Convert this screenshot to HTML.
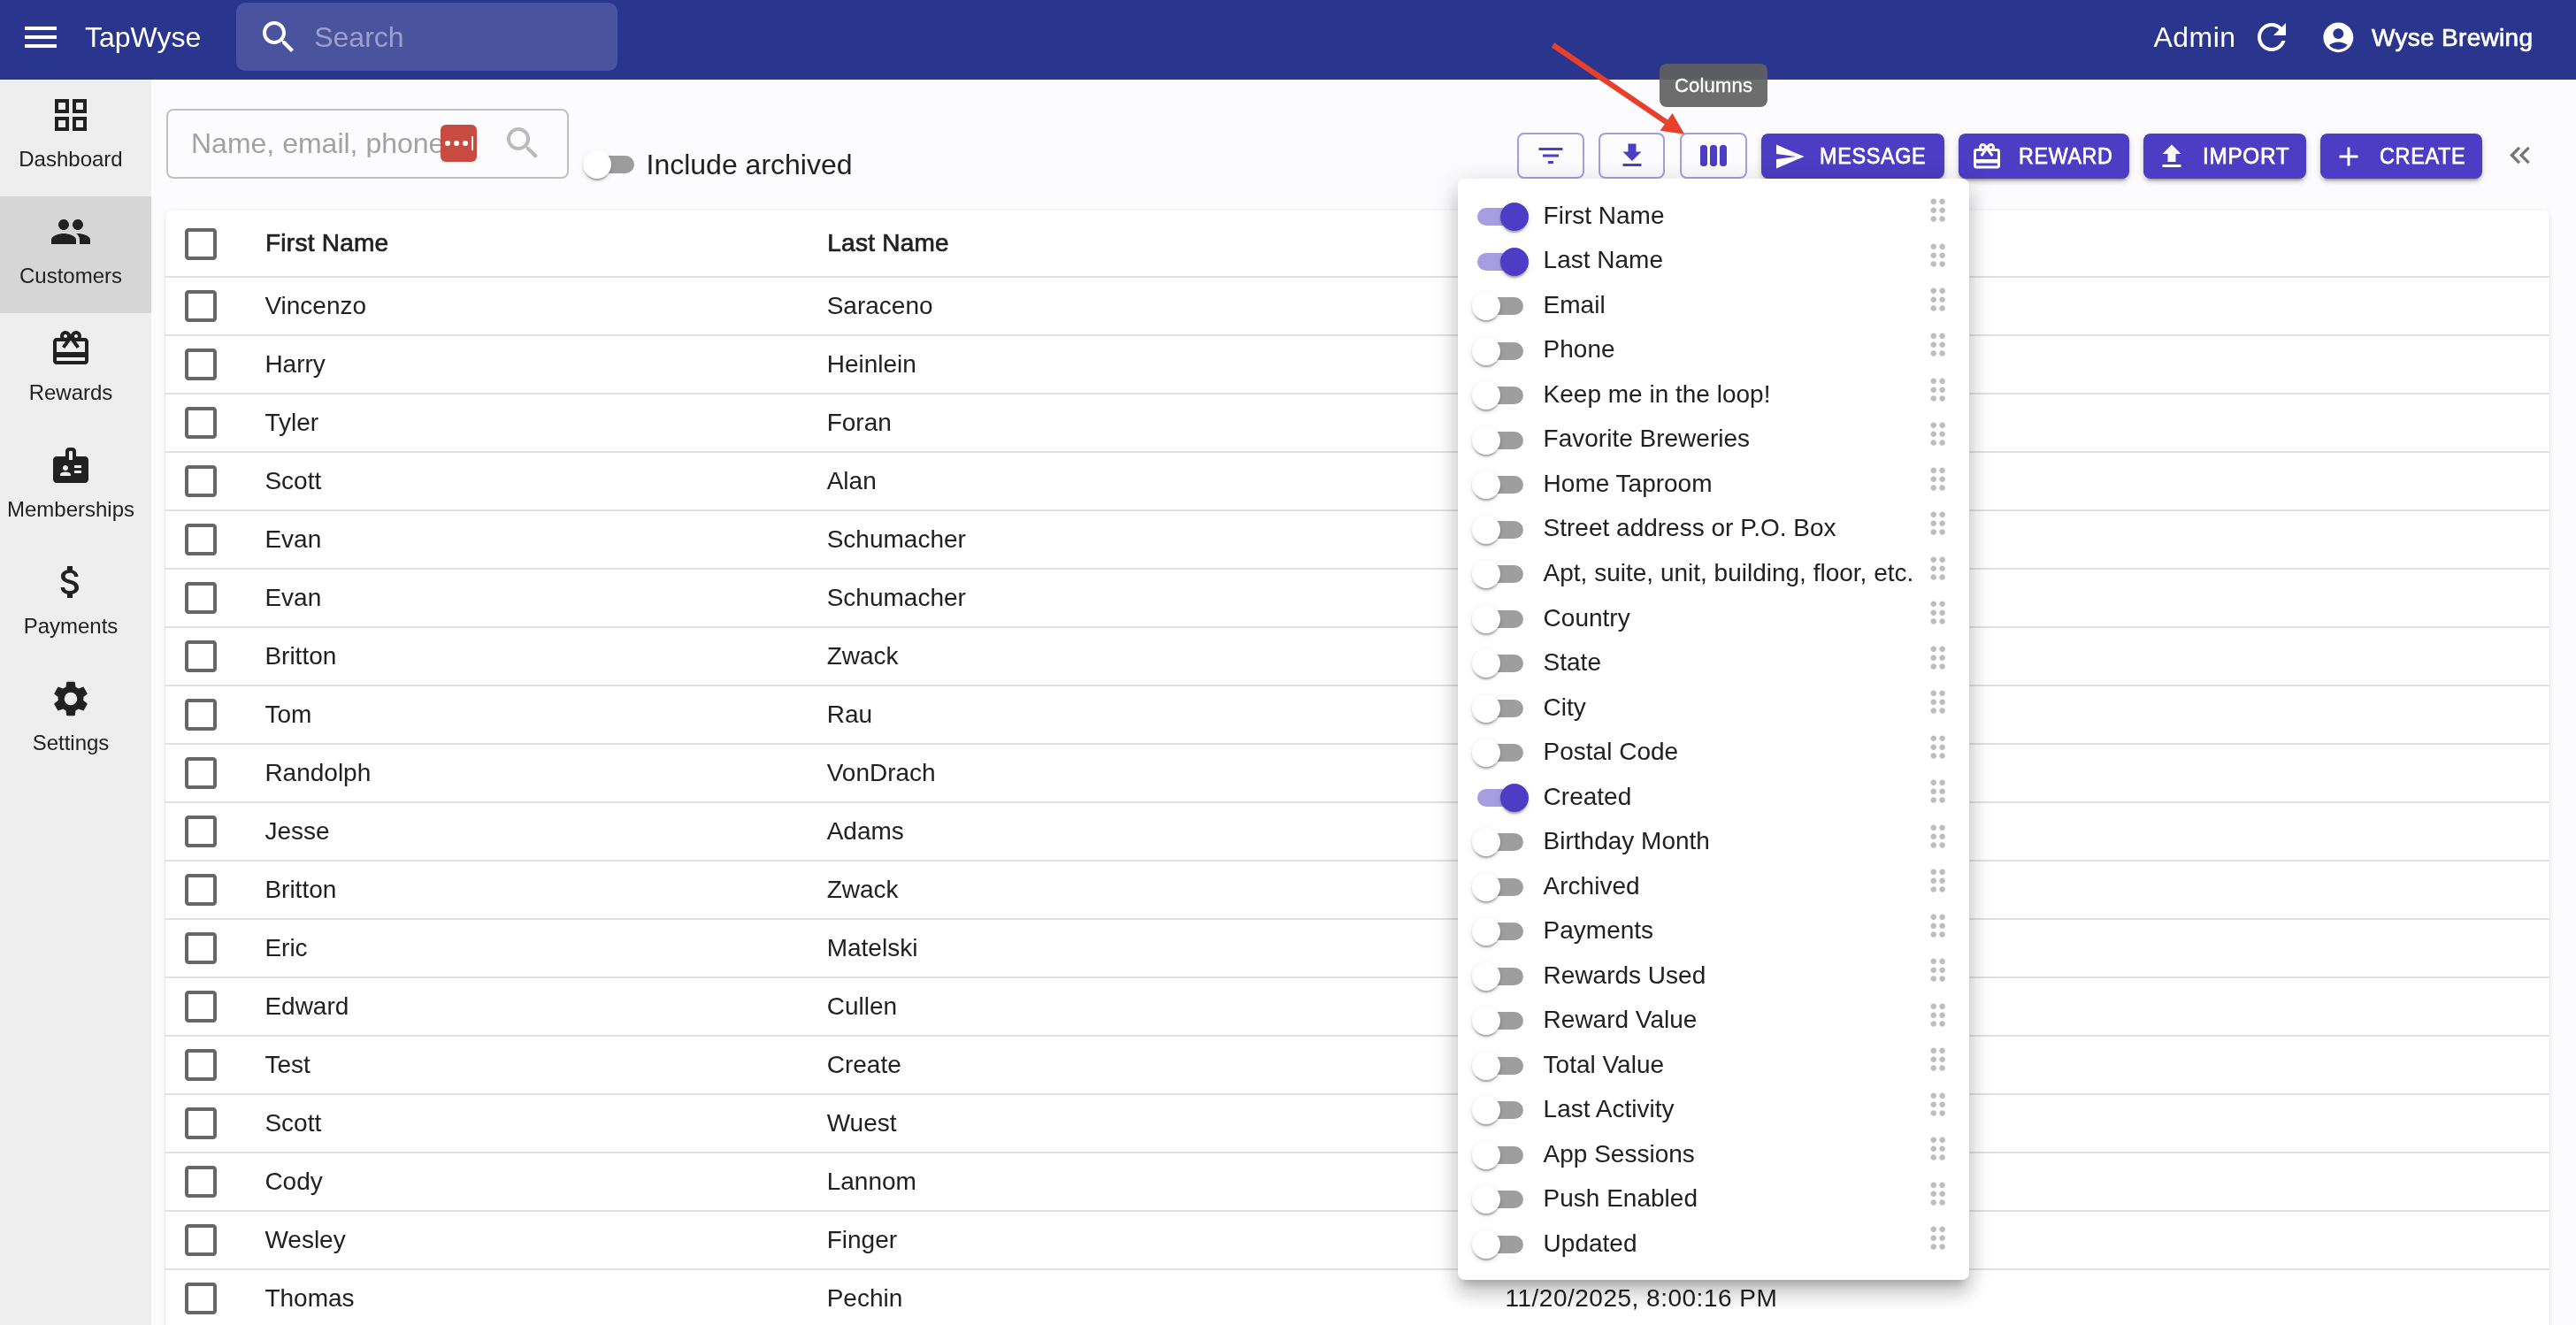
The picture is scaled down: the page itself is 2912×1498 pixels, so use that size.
<!DOCTYPE html>
<html><head><meta charset="utf-8"><title>TapWyse Customers</title>
<style>
html,body{margin:0;padding:0;}
body{width:2912px;height:1498px;overflow:hidden;position:relative;will-change:transform;background:#fcfcfe;font-family:"Liberation Sans",sans-serif;color:#212121;}
.t{position:absolute;white-space:nowrap;}
.i{position:absolute;display:block;}
.b{position:absolute;box-sizing:border-box;}
@media (max-width:1600px){html{zoom:0.5;}}
</style></head><body>

<div class="b" style="left:0;top:0;width:2912px;height:90px;background:#2a358e;"></div>
<svg class="i" style="left:22.0px;top:18.0px;width:48.0px;height:48.0px;" viewBox="0 0 24 24"><path fill="#fff" d="M3 18h18v-2H3v2zm0-5h18v-2H3v2zm0-7v2h18V6H3z"/></svg>
<div class="t" style="left:96.0px;top:26.4px;font-size:32px;line-height:32px;color:#fff;font-weight:400;">TapWyse</div>
<div class="b" style="left:267px;top:3px;width:431px;height:77px;background:rgba(255,255,255,0.15);border-radius:10px;"></div>
<svg class="i" style="left:290.7px;top:18.0px;width:48.0px;height:48.0px;" viewBox="0 0 24 24"><path fill="#fff" d="M15.5 14h-.79l-.28-.27C15.41 12.59 16 11.11 16 9.5 16 5.91 13.09 3 9.5 3S3 5.91 3 9.5 5.91 16 9.5 16c1.61 0 3.09-.59 4.23-1.570l.27.28v.79l5 4.99L20.49 19l-4.99-5zm-6 0C7.01 14 5 11.99 5 9.5S7.01 5 9.5 5 14 7.01 14 9.5 11.99 14 9.5 14z"/></svg>
<div class="t" style="left:355.2px;top:25.7px;font-size:32px;line-height:32px;color:rgba(255,255,255,0.45);font-weight:400;">Search</div>
<div class="t" style="left:2434.5px;top:26.1px;font-size:32px;line-height:32px;color:#fff;font-weight:400;letter-spacing:0.45px;">Admin</div>
<svg class="i" style="left:2544.0px;top:18.4px;width:48.0px;height:48.0px;" viewBox="0 0 24 24"><path fill="#fff" d="M17.65 6.35C16.2 4.9 14.21 4 12 4c-4.42 0-7.99 3.58-7.99 8s3.57 8 7.99 8c3.73 0 6.84-2.55 7.73-6h-2.08c-.82 2.33-3.040 4-5.65 4-3.31 0-6-2.69-6-6s2.69-6 6-6c1.66 0 3.14.69 4.22 1.78L13 11h7V4l-2.35 2.35z"/></svg>
<svg class="i" style="left:2623.4px;top:21.5px;width:40.7px;height:40.7px;" viewBox="0 0 24 24"><path fill="#fff" d="M12 2C6.48 2 2 6.48 2 12s4.48 10 10 10 10-4.48 10-10S17.52 2 12 2zm0 4c1.93 0 3.5 1.57 3.5 3.5S13.93 13 12 13s-3.5-1.57-3.5-3.5S10.07 6 12 6zm0 14c-2.03 0-4.43-.82-6.14-2.88C7.55 15.8 9.68 15 12 15s4.45.8 6.14 2.12C16.43 19.18 14.03 20 12 20z"/></svg>
<div class="t" style="left:2681.0px;top:28.8px;font-size:28px;line-height:28px;color:#fff;font-weight:400;letter-spacing:0.3px;-webkit-text-stroke:0.7px #fff;">Wyse Brewing</div>
<div class="b" style="left:0;top:90px;width:171px;height:1408px;background:#eeeeee;"></div>
<div class="b" style="left:0;top:222px;width:171px;height:132px;background:#d6d6d6;"></div>
<svg class="i" style="left:56.0px;top:105.8px;width:48.0px;height:48.0px;" viewBox="0 0 24 24"><path fill="#212121" d="M3 3v8h8V3H3zm6 6H5V5h4v4zm-6 4v8h8v-8H3zm6 6H5v-4h4v4zm4-16v8h8V3h-8zm6 6h-4V5h4v4zm-6 4v8h8v-8h-8zm6 6h-4v-4h4v4z"/></svg>
<div class="t" style="left:0;width:160px;text-align:center;top:167.5px;font-size:24px;line-height:24px;color:#212121;">Dashboard</div>
<svg class="i" style="left:56.0px;top:237.8px;width:48.0px;height:48.0px;" viewBox="0 0 24 24"><path fill="#212121" d="M16 11c1.66 0 2.99-1.34 2.99-3S17.66 5 16 5c-1.66 0-3 1.34-3 3s1.34 3 3 3zm-8 0c1.66 0 2.99-1.34 2.99-3S9.66 5 8 5C6.34 5 5 6.34 5 8s1.34 3 3 3zm0 2c-2.33 0-7 1.17-7 3.5V19h14v-2.5c0-2.33-4.67-3.5-7-3.5zm8 0c-.29 0-.62.02-.97.05 1.16.84 1.97 1.97 1.97 3.45V19h6v-2.5c0-2.33-4.67-3.5-7-3.5z"/></svg>
<div class="t" style="left:0;width:160px;text-align:center;top:299.5px;font-size:24px;line-height:24px;color:#212121;">Customers</div>
<svg class="i" style="left:56.0px;top:369.8px;width:48.0px;height:48.0px;" viewBox="0 0 24 24"><path fill="#212121" d="M20 6h-2.18c.11-.31.18-.65.18-1 0-1.66-1.34-3-3-3-1.05 0-1.96.54-2.5 1.35l-.5.67-.5-.68C10.96 2.54 10.05 2 9 2 7.34 2 6 3.34 6 5c0 .35.07.69.18 1H4c-1.11 0-1.99.89-1.99 2L2 19c0 1.11.89 2 2 2h16c1.11 0 2-.89 2-2V8c0-1.11-.89-2-2-2zm-5-2c.55 0 1 .45 1 1s-.45 1-1 1-1-.45-1-1 .45-1 1-1zM9 4c.55 0 1 .45 1 1s-.45 1-1 1-1-.45-1-1 .45-1 1-1zm11 15H4v-2h16v2zm0-5H4V8h5.08L7 10.83 8.62 12 11 8.76l1-1.36 1 1.36L15.38 12 17 10.83 14.92 8H20v6z"/></svg>
<div class="t" style="left:0;width:160px;text-align:center;top:431.5px;font-size:24px;line-height:24px;color:#212121;">Rewards</div>
<svg class="i" style="left:56.0px;top:501.8px;width:48.0px;height:48.0px;" viewBox="0 0 24 24"><path fill="#212121" d="M20 7h-5V4c0-1.1-.9-2-2-2h-2c-1.1 0-2 .9-2 2v3H4c-1.1 0-2 .9-2 2v11c0 1.1.9 2 2 2h16c1.1 0 2-.9 2-2V9c0-1.1-.9-2-2-2zM9 12c.83 0 1.5.67 1.5 1.5S9.83 15 9 15s-1.5-.67-1.5-1.5S8.17 12 9 12zm3 6H6v-.43c0-.6.36-1.15.92-1.39.64-.28 1.34-.43 2.08-.43s1.44.15 2.08.43c.55.24.92.78.92 1.39V18zm1-9h-2V4h2v5zm5 7.5h-4V15h4v1.5zm0-3h-4V12h4v1.5z"/></svg>
<div class="t" style="left:0;width:160px;text-align:center;top:563.5px;font-size:24px;line-height:24px;color:#212121;">Memberships</div>
<svg class="i" style="left:56.0px;top:633.8px;width:48.0px;height:48.0px;" viewBox="0 0 24 24"><path fill="#212121" d="M11.8 10.9c-2.27-.59-3-1.2-3-2.15 0-1.09 1.01-1.85 2.7-1.850 1.78 0 2.44.85 2.5 2.1h2.21c-.07-1.72-1.12-3.3-3.21-3.81V3h-3v2.16c-1.94.42-3.5 1.68-3.5 3.61 0 2.31 1.91 3.46 4.7 4.13 2.5.6 3 1.48 3 2.41 0 .69-.49 1.79-2.7 1.79-2.06 0-2.87-.92-2.98-2.1h-2.2c.12 2.19 1.76 3.42 3.68 3.83V21h3v-2.15c1.95-.37 3.5-1.5 3.5-3.55 0-2.84-2.43-3.81-4.7-4.4z"/></svg>
<div class="t" style="left:0;width:160px;text-align:center;top:695.5px;font-size:24px;line-height:24px;color:#212121;">Payments</div>
<svg class="i" style="left:56.0px;top:765.8px;width:48.0px;height:48.0px;" viewBox="0 0 24 24"><path fill="#212121" d="M19.14 12.94c.04-.3.06-.61.06-.94 0-.32-.02-.64-.07-.94l2.03-1.58c.18-.14.23-.41.12-.61l-1.92-3.32c-.12-.22-.37-.29-.59-.22l-2.39.96c-.5-.38-1.03-.7-1.62-.94l-.36-2.54c-.04-.24-.24-.41-.48-.41h-3.84c-.24 0-.43.17-.47.41l-.36 2.54c-.59.24-1.13.57-1.62.94l-2.39-.96c-.22-.08-.47 0-.59.22L2.74 8.87c-.12.21-.08.47.12.61l2.03 1.58c-.05.3-.09.63-.09.94s.02.64.07.94l-2.03 1.58c-.18.14-.23.41-.12.61l1.92 3.32c.12.22.37.29.59.22l2.39-.96c.5.38 1.03.7 1.62.94l.36 2.54c.05.24.24.41.48.41h3.84c.24 0 .44-.17.47-.41l.36-2.54c.59-.24 1.13-.56 1.62-.94l2.39.96c.22.08.47 0 .59-.22l1.92-3.32c.12-.22.07-.47-.12-.61l-2.01-1.58zM12 15.6c-1.98 0-3.6-1.62-3.6-3.6s1.62-3.6 3.6-3.6 3.6 1.62 3.6 3.6-1.62 3.6-3.6 3.6z"/></svg>
<div class="t" style="left:0;width:160px;text-align:center;top:827.5px;font-size:24px;line-height:24px;color:#212121;">Settings</div>
<div class="b" style="left:187.5px;top:122.5px;width:455px;height:79px;border:2px solid #c0c0c0;border-radius:8px;"></div>
<div class="t" style="left:216px;top:145.9px;font-size:32px;line-height:32px;color:#a2a2a2;width:283px;overflow:hidden;">Name, email, phone number</div>
<div class="b" style="left:498.3px;top:141.4px;width:41.2px;height:41.2px;background:#c84b41;border-radius:6px;"></div>
<div class="b" style="left:502.7px;top:158.9px;width:6px;height:6px;border-radius:3px;background:#fff;"></div>
<div class="b" style="left:512.8px;top:158.9px;width:6px;height:6px;border-radius:3px;background:#fff;"></div>
<div class="b" style="left:522.9px;top:158.9px;width:6px;height:6px;border-radius:3px;background:#fff;"></div>
<div class="b" style="left:533.3px;top:153.8px;width:2px;height:16.2px;background:#fff;"></div>
<svg class="i" style="left:566.7px;top:138.2px;width:48.0px;height:48.0px;" viewBox="0 0 24 24"><path fill="#bababa" d="M15.5 14h-.79l-.28-.27C15.41 12.59 16 11.11 16 9.5 16 5.91 13.09 3 9.5 3S3 5.91 3 9.5 5.91 16 9.5 16c1.61 0 3.09-.59 4.23-1.570l.27.28v.79l5 4.99L20.49 19l-4.99-5zm-6 0C7.01 14 5 11.99 5 9.5S7.01 5 9.5 5 14 7.01 14 9.5 11.99 14 9.5 14z"/></svg>
<div class="b" style="left:665.0px;top:176.0px;width:52px;height:20px;border-radius:10px;background:rgba(0,0,0,0.38);"></div><div class="b" style="left:659.0px;top:170.0px;width:32px;height:32px;border-radius:16px;background:#fff;box-shadow:0 4px 2px -2px rgba(0,0,0,0.2),0 2px 2px 0 rgba(0,0,0,0.14),0 2px 6px 0 rgba(0,0,0,0.12);"></div>
<div class="t" style="left:730.5px;top:169.7px;font-size:32px;line-height:32px;color:#212121;font-weight:400;">Include archived</div>
<div class="b" style="left:1715.1px;top:150px;width:75.5px;height:51.8px;border:2px solid rgba(77,61,196,0.5);border-radius:8px;"></div><svg class="i" style="left:1734.9px;top:157.8px;width:36.0px;height:36.0px;" viewBox="0 0 24 24"><path fill="#4d3dc4" d="M10 18h4v-2h-4v2zM3 6v2h18V6H3zm3 7h12v-2H6v2z"/></svg>
<div class="b" style="left:1807.1px;top:150px;width:75.2px;height:51.8px;border:2px solid rgba(77,61,196,0.5);border-radius:8px;"></div><svg class="i" style="left:1827.0px;top:157.6px;width:36.0px;height:36.0px;" viewBox="0 0 24 24"><path fill="#4d3dc4" d="M19 9h-4V3H9v6H5l7 7 7-7zM5 18v2h14v-2H5z"/></svg>
<div class="b" style="left:1899.1px;top:150px;width:75.5px;height:51.8px;border:2px solid rgba(77,61,196,0.5);border-radius:8px;"></div><svg class="i" style="left:1918.8px;top:157.9px;width:36.0px;height:36.0px;" viewBox="0 0 24 24"><path fill="#4d3dc4" d="M5.33 20H4c-1.1 0-2-.9-2-2V6c0-1.1.9-2 2-2h1.33c1.1 0 2 .9 2 2v12c0 1.1-.9 2-2 2zM22 18V6c0-1.1-.9-2-2-2h-1.33c-1.1 0-2 .9-2 2v12c0 1.1.9 2 2 2H20c1.1 0 2-.9 2-2zm-7.33 0V6c0-1.1-.9-2-2-2h-1.33c-1.1 0-2 .9-2 2v12c0 1.1.9 2 2 2h1.33c1.1 0 2-.9 2-2z"/></svg>
<div class="b" style="left:1991.1px;top:151.1px;width:206.7px;height:50.8px;background:#4d3dc4;border-radius:8px;box-shadow:0 6px 2px -4px rgba(0,0,0,0.2),0 4px 4px 0 rgba(0,0,0,0.14),0 2px 10px 0 rgba(0,0,0,0.12);"></div><svg class="i" style="left:2005.2px;top:158.5px;width:36.0px;height:36.0px;" viewBox="0 0 24 24"><path fill="#fff" d="M2.01 21L23 12 2.01 3 2 10l15 2-15 2z"/></svg><div class="t" style="left:2057.4px;top:163.3px;font-size:26px;line-height:26px;color:#fff;font-weight:400;letter-spacing:0.74px;-webkit-text-stroke:0.75px #fff;transform-origin:0 0;transform:scaleX(0.90);">MESSAGE</div>
<div class="b" style="left:2214px;top:151.1px;width:193.0px;height:50.8px;background:#4d3dc4;border-radius:8px;box-shadow:0 6px 2px -4px rgba(0,0,0,0.2),0 4px 4px 0 rgba(0,0,0,0.14),0 2px 10px 0 rgba(0,0,0,0.12);"></div><svg class="i" style="left:2227.7px;top:159.2px;width:36.0px;height:36.0px;" viewBox="0 0 24 24"><path fill="#fff" d="M20 6h-2.18c.11-.31.18-.65.18-1 0-1.66-1.34-3-3-3-1.05 0-1.96.54-2.5 1.35l-.5.67-.5-.68C10.96 2.54 10.05 2 9 2 7.34 2 6 3.34 6 5c0 .35.07.69.18 1H4c-1.11 0-1.99.89-1.99 2L2 19c0 1.11.89 2 2 2h16c1.11 0 2-.89 2-2V8c0-1.11-.89-2-2-2zm-5-2c.55 0 1 .45 1 1s-.45 1-1 1-1-.45-1-1 .45-1 1-1zM9 4c.55 0 1 .45 1 1s-.45 1-1 1-1-.45-1-1 .45-1 1-1zm11 15H4v-2h16v2zm0-5H4V8h5.08L7 10.83 8.62 12 11 8.76l1-1.36 1 1.36L15.38 12 17 10.83 14.92 8H20v6z"/></svg><div class="t" style="left:2281.5px;top:163.3px;font-size:26px;line-height:26px;color:#fff;font-weight:400;letter-spacing:0.74px;-webkit-text-stroke:0.75px #fff;transform-origin:0 0;transform:scaleX(0.895);">REWARD</div>
<div class="b" style="left:2423.1px;top:151.1px;width:183.6px;height:50.8px;background:#4d3dc4;border-radius:8px;box-shadow:0 6px 2px -4px rgba(0,0,0,0.2),0 4px 4px 0 rgba(0,0,0,0.14),0 2px 10px 0 rgba(0,0,0,0.12);"></div><svg class="i" style="left:2436.6px;top:158.5px;width:36.0px;height:36.0px;" viewBox="0 0 24 24"><path fill="#fff" d="M5 20h14v-2H5v2zm0-10h4v6h6v-6h4l-7-7-7 7z"/></svg><div class="t" style="left:2490.3px;top:163.3px;font-size:26px;line-height:26px;color:#fff;font-weight:400;letter-spacing:0.74px;-webkit-text-stroke:0.75px #fff;transform-origin:0 0;transform:scaleX(0.935);">IMPORT</div>
<div class="b" style="left:2623.1px;top:151.1px;width:182.8px;height:50.8px;background:#4d3dc4;border-radius:8px;box-shadow:0 6px 2px -4px rgba(0,0,0,0.2),0 4px 4px 0 rgba(0,0,0,0.14),0 2px 10px 0 rgba(0,0,0,0.12);"></div><svg class="i" style="left:2636.9px;top:159.0px;width:36.0px;height:36.0px;" viewBox="0 0 24 24"><path fill="#fff" d="M19 13h-6v6h-2v-6H5v-2h6V5h2v6h6v2z"/></svg><div class="t" style="left:2690.0px;top:163.3px;font-size:26px;line-height:26px;color:#fff;font-weight:400;letter-spacing:0.74px;-webkit-text-stroke:0.75px #fff;transform-origin:0 0;transform:scaleX(0.90);">CREATE</div>
<svg class="i" style="left:2828.5px;top:156.0px;width:38.9px;height:38.9px;" viewBox="0 0 24 24"><path fill="#757575" d="M17.59 18L19 16.59 14.42 12 19 7.41 17.59 6l-6 6zM11 18l1.41-1.41L7.83 12l4.58-4.59L11 6l-6 6z"/></svg>
<div class="b" style="left:187px;top:238px;width:2695px;height:1300px;background:#fff;border-radius:7px;box-shadow:0 3px 2px -2px rgba(0,0,0,0.2),0 2px 2px 0 rgba(0,0,0,0.12),0 1px 5px 0 rgba(0,0,0,0.1);"></div>
<div class="b" style="left:187px;top:311.7px;width:2695px;height:2px;background:#e0e0e0;"></div>
<svg class="i" style="left:203.4px;top:252.0px;width:48.0px;height:48.0px;" viewBox="0 0 24 24"><path fill="#666666" d="M19 5v14H5V5h14m0-2H5c-1.1 0-2 .9-2 2v14c0 1.1.9 2 2 2h14c1.1 0 2-.9 2-2V5c0-1.1-.9-2-2-2z"/></svg>
<div class="t" style="left:300.0px;top:261.3px;font-size:28px;line-height:28px;color:#212121;font-weight:400;letter-spacing:0.25px;-webkit-text-stroke:0.7px #212121;">First Name</div>
<div class="t" style="left:935.3px;top:261.3px;font-size:28px;line-height:28px;color:#212121;font-weight:400;letter-spacing:0.25px;-webkit-text-stroke:0.7px #212121;">Last Name</div>
<svg class="i" style="left:203.4px;top:322.0px;width:48.0px;height:48.0px;" viewBox="0 0 24 24"><path fill="#666666" d="M19 5v14H5V5h14m0-2H5c-1.1 0-2 .9-2 2v14c0 1.1.9 2 2 2h14c1.1 0 2-.9 2-2V5c0-1.1-.9-2-2-2z"/></svg>
<div class="t" style="left:299.4px;top:332.0px;font-size:28px;line-height:28px;color:#212121;font-weight:400;">Vincenzo</div>
<div class="t" style="left:934.7px;top:332.0px;font-size:28px;line-height:28px;color:#212121;font-weight:400;">Saraceno</div>
<div class="b" style="left:187px;top:377.7px;width:2695px;height:2px;background:#e0e0e0;"></div>
<svg class="i" style="left:203.4px;top:388.0px;width:48.0px;height:48.0px;" viewBox="0 0 24 24"><path fill="#666666" d="M19 5v14H5V5h14m0-2H5c-1.1 0-2 .9-2 2v14c0 1.1.9 2 2 2h14c1.1 0 2-.9 2-2V5c0-1.1-.9-2-2-2z"/></svg>
<div class="t" style="left:299.4px;top:398.0px;font-size:28px;line-height:28px;color:#212121;font-weight:400;">Harry</div>
<div class="t" style="left:934.7px;top:398.0px;font-size:28px;line-height:28px;color:#212121;font-weight:400;">Heinlein</div>
<div class="b" style="left:187px;top:443.7px;width:2695px;height:2px;background:#e0e0e0;"></div>
<svg class="i" style="left:203.4px;top:454.0px;width:48.0px;height:48.0px;" viewBox="0 0 24 24"><path fill="#666666" d="M19 5v14H5V5h14m0-2H5c-1.1 0-2 .9-2 2v14c0 1.1.9 2 2 2h14c1.1 0 2-.9 2-2V5c0-1.1-.9-2-2-2z"/></svg>
<div class="t" style="left:299.4px;top:464.0px;font-size:28px;line-height:28px;color:#212121;font-weight:400;">Tyler</div>
<div class="t" style="left:934.7px;top:464.0px;font-size:28px;line-height:28px;color:#212121;font-weight:400;">Foran</div>
<div class="b" style="left:187px;top:509.7px;width:2695px;height:2px;background:#e0e0e0;"></div>
<svg class="i" style="left:203.4px;top:520.0px;width:48.0px;height:48.0px;" viewBox="0 0 24 24"><path fill="#666666" d="M19 5v14H5V5h14m0-2H5c-1.1 0-2 .9-2 2v14c0 1.1.9 2 2 2h14c1.1 0 2-.9 2-2V5c0-1.1-.9-2-2-2z"/></svg>
<div class="t" style="left:299.4px;top:530.0px;font-size:28px;line-height:28px;color:#212121;font-weight:400;">Scott</div>
<div class="t" style="left:934.7px;top:530.0px;font-size:28px;line-height:28px;color:#212121;font-weight:400;">Alan</div>
<div class="b" style="left:187px;top:575.7px;width:2695px;height:2px;background:#e0e0e0;"></div>
<svg class="i" style="left:203.4px;top:586.0px;width:48.0px;height:48.0px;" viewBox="0 0 24 24"><path fill="#666666" d="M19 5v14H5V5h14m0-2H5c-1.1 0-2 .9-2 2v14c0 1.1.9 2 2 2h14c1.1 0 2-.9 2-2V5c0-1.1-.9-2-2-2z"/></svg>
<div class="t" style="left:299.4px;top:596.0px;font-size:28px;line-height:28px;color:#212121;font-weight:400;">Evan</div>
<div class="t" style="left:934.7px;top:596.0px;font-size:28px;line-height:28px;color:#212121;font-weight:400;">Schumacher</div>
<div class="b" style="left:187px;top:641.7px;width:2695px;height:2px;background:#e0e0e0;"></div>
<svg class="i" style="left:203.4px;top:652.0px;width:48.0px;height:48.0px;" viewBox="0 0 24 24"><path fill="#666666" d="M19 5v14H5V5h14m0-2H5c-1.1 0-2 .9-2 2v14c0 1.1.9 2 2 2h14c1.1 0 2-.9 2-2V5c0-1.1-.9-2-2-2z"/></svg>
<div class="t" style="left:299.4px;top:662.0px;font-size:28px;line-height:28px;color:#212121;font-weight:400;">Evan</div>
<div class="t" style="left:934.7px;top:662.0px;font-size:28px;line-height:28px;color:#212121;font-weight:400;">Schumacher</div>
<div class="b" style="left:187px;top:707.7px;width:2695px;height:2px;background:#e0e0e0;"></div>
<svg class="i" style="left:203.4px;top:718.0px;width:48.0px;height:48.0px;" viewBox="0 0 24 24"><path fill="#666666" d="M19 5v14H5V5h14m0-2H5c-1.1 0-2 .9-2 2v14c0 1.1.9 2 2 2h14c1.1 0 2-.9 2-2V5c0-1.1-.9-2-2-2z"/></svg>
<div class="t" style="left:299.4px;top:728.0px;font-size:28px;line-height:28px;color:#212121;font-weight:400;">Britton</div>
<div class="t" style="left:934.7px;top:728.0px;font-size:28px;line-height:28px;color:#212121;font-weight:400;">Zwack</div>
<div class="b" style="left:187px;top:773.7px;width:2695px;height:2px;background:#e0e0e0;"></div>
<svg class="i" style="left:203.4px;top:784.0px;width:48.0px;height:48.0px;" viewBox="0 0 24 24"><path fill="#666666" d="M19 5v14H5V5h14m0-2H5c-1.1 0-2 .9-2 2v14c0 1.1.9 2 2 2h14c1.1 0 2-.9 2-2V5c0-1.1-.9-2-2-2z"/></svg>
<div class="t" style="left:299.4px;top:794.0px;font-size:28px;line-height:28px;color:#212121;font-weight:400;">Tom</div>
<div class="t" style="left:934.7px;top:794.0px;font-size:28px;line-height:28px;color:#212121;font-weight:400;">Rau</div>
<div class="b" style="left:187px;top:839.7px;width:2695px;height:2px;background:#e0e0e0;"></div>
<svg class="i" style="left:203.4px;top:850.0px;width:48.0px;height:48.0px;" viewBox="0 0 24 24"><path fill="#666666" d="M19 5v14H5V5h14m0-2H5c-1.1 0-2 .9-2 2v14c0 1.1.9 2 2 2h14c1.1 0 2-.9 2-2V5c0-1.1-.9-2-2-2z"/></svg>
<div class="t" style="left:299.4px;top:860.0px;font-size:28px;line-height:28px;color:#212121;font-weight:400;">Randolph</div>
<div class="t" style="left:934.7px;top:860.0px;font-size:28px;line-height:28px;color:#212121;font-weight:400;">VonDrach</div>
<div class="b" style="left:187px;top:905.7px;width:2695px;height:2px;background:#e0e0e0;"></div>
<svg class="i" style="left:203.4px;top:916.0px;width:48.0px;height:48.0px;" viewBox="0 0 24 24"><path fill="#666666" d="M19 5v14H5V5h14m0-2H5c-1.1 0-2 .9-2 2v14c0 1.1.9 2 2 2h14c1.1 0 2-.9 2-2V5c0-1.1-.9-2-2-2z"/></svg>
<div class="t" style="left:299.4px;top:926.0px;font-size:28px;line-height:28px;color:#212121;font-weight:400;">Jesse</div>
<div class="t" style="left:934.7px;top:926.0px;font-size:28px;line-height:28px;color:#212121;font-weight:400;">Adams</div>
<div class="b" style="left:187px;top:971.7px;width:2695px;height:2px;background:#e0e0e0;"></div>
<svg class="i" style="left:203.4px;top:982.0px;width:48.0px;height:48.0px;" viewBox="0 0 24 24"><path fill="#666666" d="M19 5v14H5V5h14m0-2H5c-1.1 0-2 .9-2 2v14c0 1.1.9 2 2 2h14c1.1 0 2-.9 2-2V5c0-1.1-.9-2-2-2z"/></svg>
<div class="t" style="left:299.4px;top:992.0px;font-size:28px;line-height:28px;color:#212121;font-weight:400;">Britton</div>
<div class="t" style="left:934.7px;top:992.0px;font-size:28px;line-height:28px;color:#212121;font-weight:400;">Zwack</div>
<div class="b" style="left:187px;top:1037.7px;width:2695px;height:2px;background:#e0e0e0;"></div>
<svg class="i" style="left:203.4px;top:1048.0px;width:48.0px;height:48.0px;" viewBox="0 0 24 24"><path fill="#666666" d="M19 5v14H5V5h14m0-2H5c-1.1 0-2 .9-2 2v14c0 1.1.9 2 2 2h14c1.1 0 2-.9 2-2V5c0-1.1-.9-2-2-2z"/></svg>
<div class="t" style="left:299.4px;top:1058.0px;font-size:28px;line-height:28px;color:#212121;font-weight:400;">Eric</div>
<div class="t" style="left:934.7px;top:1058.0px;font-size:28px;line-height:28px;color:#212121;font-weight:400;">Matelski</div>
<div class="b" style="left:187px;top:1103.7px;width:2695px;height:2px;background:#e0e0e0;"></div>
<svg class="i" style="left:203.4px;top:1114.0px;width:48.0px;height:48.0px;" viewBox="0 0 24 24"><path fill="#666666" d="M19 5v14H5V5h14m0-2H5c-1.1 0-2 .9-2 2v14c0 1.1.9 2 2 2h14c1.1 0 2-.9 2-2V5c0-1.1-.9-2-2-2z"/></svg>
<div class="t" style="left:299.4px;top:1124.0px;font-size:28px;line-height:28px;color:#212121;font-weight:400;">Edward</div>
<div class="t" style="left:934.7px;top:1124.0px;font-size:28px;line-height:28px;color:#212121;font-weight:400;">Cullen</div>
<div class="b" style="left:187px;top:1169.7px;width:2695px;height:2px;background:#e0e0e0;"></div>
<svg class="i" style="left:203.4px;top:1180.0px;width:48.0px;height:48.0px;" viewBox="0 0 24 24"><path fill="#666666" d="M19 5v14H5V5h14m0-2H5c-1.1 0-2 .9-2 2v14c0 1.1.9 2 2 2h14c1.1 0 2-.9 2-2V5c0-1.1-.9-2-2-2z"/></svg>
<div class="t" style="left:299.4px;top:1190.0px;font-size:28px;line-height:28px;color:#212121;font-weight:400;">Test</div>
<div class="t" style="left:934.7px;top:1190.0px;font-size:28px;line-height:28px;color:#212121;font-weight:400;">Create</div>
<div class="b" style="left:187px;top:1235.7px;width:2695px;height:2px;background:#e0e0e0;"></div>
<svg class="i" style="left:203.4px;top:1246.0px;width:48.0px;height:48.0px;" viewBox="0 0 24 24"><path fill="#666666" d="M19 5v14H5V5h14m0-2H5c-1.1 0-2 .9-2 2v14c0 1.1.9 2 2 2h14c1.1 0 2-.9 2-2V5c0-1.1-.9-2-2-2z"/></svg>
<div class="t" style="left:299.4px;top:1256.0px;font-size:28px;line-height:28px;color:#212121;font-weight:400;">Scott</div>
<div class="t" style="left:934.7px;top:1256.0px;font-size:28px;line-height:28px;color:#212121;font-weight:400;">Wuest</div>
<div class="b" style="left:187px;top:1301.7px;width:2695px;height:2px;background:#e0e0e0;"></div>
<svg class="i" style="left:203.4px;top:1312.0px;width:48.0px;height:48.0px;" viewBox="0 0 24 24"><path fill="#666666" d="M19 5v14H5V5h14m0-2H5c-1.1 0-2 .9-2 2v14c0 1.1.9 2 2 2h14c1.1 0 2-.9 2-2V5c0-1.1-.9-2-2-2z"/></svg>
<div class="t" style="left:299.4px;top:1322.0px;font-size:28px;line-height:28px;color:#212121;font-weight:400;">Cody</div>
<div class="t" style="left:934.7px;top:1322.0px;font-size:28px;line-height:28px;color:#212121;font-weight:400;">Lannom</div>
<div class="b" style="left:187px;top:1367.7px;width:2695px;height:2px;background:#e0e0e0;"></div>
<svg class="i" style="left:203.4px;top:1378.0px;width:48.0px;height:48.0px;" viewBox="0 0 24 24"><path fill="#666666" d="M19 5v14H5V5h14m0-2H5c-1.1 0-2 .9-2 2v14c0 1.1.9 2 2 2h14c1.1 0 2-.9 2-2V5c0-1.1-.9-2-2-2z"/></svg>
<div class="t" style="left:299.4px;top:1388.0px;font-size:28px;line-height:28px;color:#212121;font-weight:400;">Wesley</div>
<div class="t" style="left:934.7px;top:1388.0px;font-size:28px;line-height:28px;color:#212121;font-weight:400;">Finger</div>
<div class="b" style="left:187px;top:1433.7px;width:2695px;height:2px;background:#e0e0e0;"></div>
<svg class="i" style="left:203.4px;top:1444.0px;width:48.0px;height:48.0px;" viewBox="0 0 24 24"><path fill="#666666" d="M19 5v14H5V5h14m0-2H5c-1.1 0-2 .9-2 2v14c0 1.1.9 2 2 2h14c1.1 0 2-.9 2-2V5c0-1.1-.9-2-2-2z"/></svg>
<div class="t" style="left:299.4px;top:1454.0px;font-size:28px;line-height:28px;color:#212121;font-weight:400;">Thomas</div>
<div class="t" style="left:934.7px;top:1454.0px;font-size:28px;line-height:28px;color:#212121;font-weight:400;">Pechin</div>
<div class="b" style="left:187px;top:1499.7px;width:2695px;height:2px;background:#e0e0e0;"></div>
<div class="t" style="left:1701.5px;top:1454.4px;font-size:28px;line-height:28px;color:#212121;font-weight:400;letter-spacing:0.5px;">11/20/2025, 8:00:16 PM</div>
<div class="b" style="left:1876px;top:72px;width:122px;height:48.5px;background:rgba(97,97,97,0.92);border-radius:8px;"></div>
<div class="t" style="left:1876px;width:122px;text-align:center;top:86.3px;font-size:22px;line-height:22px;color:#fff;font-weight:400;letter-spacing:0.2px;-webkit-text-stroke:0.35px #fff;">Columns</div>
<div class="b" style="left:1648px;top:202px;width:578px;height:1245px;background:#fff;border-radius:8px;box-shadow:0 10px 10px -6px rgba(0,0,0,0.2),0 16px 20px 2px rgba(0,0,0,0.14),0 6px 28px 4px rgba(0,0,0,0.12);"></div>
<div class="b" style="left:1670.0px;top:235.0px;width:52px;height:20px;border-radius:10px;background:rgba(77,61,196,0.5);"></div><div class="b" style="left:1696.0px;top:229.0px;width:32px;height:32px;border-radius:16px;background:#4d3dc4;box-shadow:0 4px 2px -2px rgba(0,0,0,0.2),0 2px 2px 0 rgba(0,0,0,0.14),0 2px 6px 0 rgba(0,0,0,0.12);"></div>
<div class="t" style="left:1744.6px;top:229.8px;font-size:28px;line-height:28px;color:#212121;font-weight:400;">First Name</div>
<svg class="i" style="left:2170.5px;top:218.4px;width:39.4px;height:39.4px;" viewBox="0 0 24 24"><path fill="#bdbdbd" d="M11 18c0 1.1-.9 2-2 2s-2-.9-2-2 .9-2 2-2 2 .9 2 2zm-2-8c-1.1 0-2 .9-2 2s.9 2 2 2 2-.9 2-2-.9-2-2-2zm0-6c-1.1 0-2 .9-2 2s.9 2 2 2 2-.9 2-2-.9-2-2-2zm6 4c1.1 0 2-.9 2-2s-.9-2-2-2-2 .9-2 2 .9 2 2 2zm0 2c-1.1 0-2 .9-2 2s.9 2 2 2 2-.9 2-2-.9-2-2-2zm0 6c-1.1 0-2 .9-2 2s.9 2 2 2 2-.9 2-2-.9-2-2-2z"/></svg>
<div class="b" style="left:1670.0px;top:285.5px;width:52px;height:20px;border-radius:10px;background:rgba(77,61,196,0.5);"></div><div class="b" style="left:1696.0px;top:279.5px;width:32px;height:32px;border-radius:16px;background:#4d3dc4;box-shadow:0 4px 2px -2px rgba(0,0,0,0.2),0 2px 2px 0 rgba(0,0,0,0.14),0 2px 6px 0 rgba(0,0,0,0.12);"></div>
<div class="t" style="left:1744.6px;top:280.3px;font-size:28px;line-height:28px;color:#212121;font-weight:400;">Last Name</div>
<svg class="i" style="left:2170.5px;top:268.9px;width:39.4px;height:39.4px;" viewBox="0 0 24 24"><path fill="#bdbdbd" d="M11 18c0 1.1-.9 2-2 2s-2-.9-2-2 .9-2 2-2 2 .9 2 2zm-2-8c-1.1 0-2 .9-2 2s.9 2 2 2 2-.9 2-2-.9-2-2-2zm0-6c-1.1 0-2 .9-2 2s.9 2 2 2 2-.9 2-2-.9-2-2-2zm6 4c1.1 0 2-.9 2-2s-.9-2-2-2-2 .9-2 2 .9 2 2 2zm0 2c-1.1 0-2 .9-2 2s.9 2 2 2 2-.9 2-2-.9-2-2-2zm0 6c-1.1 0-2 .9-2 2s.9 2 2 2 2-.9 2-2-.9-2-2-2z"/></svg>
<div class="b" style="left:1670.0px;top:336.0px;width:52px;height:20px;border-radius:10px;background:rgba(0,0,0,0.38);"></div><div class="b" style="left:1664.0px;top:330.0px;width:32px;height:32px;border-radius:16px;background:#fff;box-shadow:0 4px 2px -2px rgba(0,0,0,0.2),0 2px 2px 0 rgba(0,0,0,0.14),0 2px 6px 0 rgba(0,0,0,0.12);"></div>
<div class="t" style="left:1744.6px;top:330.8px;font-size:28px;line-height:28px;color:#212121;font-weight:400;">Email</div>
<svg class="i" style="left:2170.5px;top:319.4px;width:39.4px;height:39.4px;" viewBox="0 0 24 24"><path fill="#bdbdbd" d="M11 18c0 1.1-.9 2-2 2s-2-.9-2-2 .9-2 2-2 2 .9 2 2zm-2-8c-1.1 0-2 .9-2 2s.9 2 2 2 2-.9 2-2-.9-2-2-2zm0-6c-1.1 0-2 .9-2 2s.9 2 2 2 2-.9 2-2-.9-2-2-2zm6 4c1.1 0 2-.9 2-2s-.9-2-2-2-2 .9-2 2 .9 2 2 2zm0 2c-1.1 0-2 .9-2 2s.9 2 2 2 2-.9 2-2-.9-2-2-2zm0 6c-1.1 0-2 .9-2 2s.9 2 2 2 2-.9 2-2-.9-2-2-2z"/></svg>
<div class="b" style="left:1670.0px;top:386.6px;width:52px;height:20px;border-radius:10px;background:rgba(0,0,0,0.38);"></div><div class="b" style="left:1664.0px;top:380.6px;width:32px;height:32px;border-radius:16px;background:#fff;box-shadow:0 4px 2px -2px rgba(0,0,0,0.2),0 2px 2px 0 rgba(0,0,0,0.14),0 2px 6px 0 rgba(0,0,0,0.12);"></div>
<div class="t" style="left:1744.6px;top:381.4px;font-size:28px;line-height:28px;color:#212121;font-weight:400;">Phone</div>
<svg class="i" style="left:2170.5px;top:370.0px;width:39.4px;height:39.4px;" viewBox="0 0 24 24"><path fill="#bdbdbd" d="M11 18c0 1.1-.9 2-2 2s-2-.9-2-2 .9-2 2-2 2 .9 2 2zm-2-8c-1.1 0-2 .9-2 2s.9 2 2 2 2-.9 2-2-.9-2-2-2zm0-6c-1.1 0-2 .9-2 2s.9 2 2 2 2-.9 2-2-.9-2-2-2zm6 4c1.1 0 2-.9 2-2s-.9-2-2-2-2 .9-2 2 .9 2 2 2zm0 2c-1.1 0-2 .9-2 2s.9 2 2 2 2-.9 2-2-.9-2-2-2zm0 6c-1.1 0-2 .9-2 2s.9 2 2 2 2-.9 2-2-.9-2-2-2z"/></svg>
<div class="b" style="left:1670.0px;top:437.1px;width:52px;height:20px;border-radius:10px;background:rgba(0,0,0,0.38);"></div><div class="b" style="left:1664.0px;top:431.1px;width:32px;height:32px;border-radius:16px;background:#fff;box-shadow:0 4px 2px -2px rgba(0,0,0,0.2),0 2px 2px 0 rgba(0,0,0,0.14),0 2px 6px 0 rgba(0,0,0,0.12);"></div>
<div class="t" style="left:1744.6px;top:431.9px;font-size:28px;line-height:28px;color:#212121;font-weight:400;">Keep me in the loop!</div>
<svg class="i" style="left:2170.5px;top:420.5px;width:39.4px;height:39.4px;" viewBox="0 0 24 24"><path fill="#bdbdbd" d="M11 18c0 1.1-.9 2-2 2s-2-.9-2-2 .9-2 2-2 2 .9 2 2zm-2-8c-1.1 0-2 .9-2 2s.9 2 2 2 2-.9 2-2-.9-2-2-2zm0-6c-1.1 0-2 .9-2 2s.9 2 2 2 2-.9 2-2-.9-2-2-2zm6 4c1.1 0 2-.9 2-2s-.9-2-2-2-2 .9-2 2 .9 2 2 2zm0 2c-1.1 0-2 .9-2 2s.9 2 2 2 2-.9 2-2-.9-2-2-2zm0 6c-1.1 0-2 .9-2 2s.9 2 2 2 2-.9 2-2-.9-2-2-2z"/></svg>
<div class="b" style="left:1670.0px;top:487.6px;width:52px;height:20px;border-radius:10px;background:rgba(0,0,0,0.38);"></div><div class="b" style="left:1664.0px;top:481.6px;width:32px;height:32px;border-radius:16px;background:#fff;box-shadow:0 4px 2px -2px rgba(0,0,0,0.2),0 2px 2px 0 rgba(0,0,0,0.14),0 2px 6px 0 rgba(0,0,0,0.12);"></div>
<div class="t" style="left:1744.6px;top:482.4px;font-size:28px;line-height:28px;color:#212121;font-weight:400;">Favorite Breweries</div>
<svg class="i" style="left:2170.5px;top:471.0px;width:39.4px;height:39.4px;" viewBox="0 0 24 24"><path fill="#bdbdbd" d="M11 18c0 1.1-.9 2-2 2s-2-.9-2-2 .9-2 2-2 2 .9 2 2zm-2-8c-1.1 0-2 .9-2 2s.9 2 2 2 2-.9 2-2-.9-2-2-2zm0-6c-1.1 0-2 .9-2 2s.9 2 2 2 2-.9 2-2-.9-2-2-2zm6 4c1.1 0 2-.9 2-2s-.9-2-2-2-2 .9-2 2 .9 2 2 2zm0 2c-1.1 0-2 .9-2 2s.9 2 2 2 2-.9 2-2-.9-2-2-2zm0 6c-1.1 0-2 .9-2 2s.9 2 2 2 2-.9 2-2-.9-2-2-2z"/></svg>
<div class="b" style="left:1670.0px;top:538.1px;width:52px;height:20px;border-radius:10px;background:rgba(0,0,0,0.38);"></div><div class="b" style="left:1664.0px;top:532.1px;width:32px;height:32px;border-radius:16px;background:#fff;box-shadow:0 4px 2px -2px rgba(0,0,0,0.2),0 2px 2px 0 rgba(0,0,0,0.14),0 2px 6px 0 rgba(0,0,0,0.12);"></div>
<div class="t" style="left:1744.6px;top:532.9px;font-size:28px;line-height:28px;color:#212121;font-weight:400;">Home Taproom</div>
<svg class="i" style="left:2170.5px;top:521.5px;width:39.4px;height:39.4px;" viewBox="0 0 24 24"><path fill="#bdbdbd" d="M11 18c0 1.1-.9 2-2 2s-2-.9-2-2 .9-2 2-2 2 .9 2 2zm-2-8c-1.1 0-2 .9-2 2s.9 2 2 2 2-.9 2-2-.9-2-2-2zm0-6c-1.1 0-2 .9-2 2s.9 2 2 2 2-.9 2-2-.9-2-2-2zm6 4c1.1 0 2-.9 2-2s-.9-2-2-2-2 .9-2 2 .9 2 2 2zm0 2c-1.1 0-2 .9-2 2s.9 2 2 2 2-.9 2-2-.9-2-2-2zm0 6c-1.1 0-2 .9-2 2s.9 2 2 2 2-.9 2-2-.9-2-2-2z"/></svg>
<div class="b" style="left:1670.0px;top:588.6px;width:52px;height:20px;border-radius:10px;background:rgba(0,0,0,0.38);"></div><div class="b" style="left:1664.0px;top:582.6px;width:32px;height:32px;border-radius:16px;background:#fff;box-shadow:0 4px 2px -2px rgba(0,0,0,0.2),0 2px 2px 0 rgba(0,0,0,0.14),0 2px 6px 0 rgba(0,0,0,0.12);"></div>
<div class="t" style="left:1744.6px;top:583.4px;font-size:28px;line-height:28px;color:#212121;font-weight:400;">Street address or P.O. Box</div>
<svg class="i" style="left:2170.5px;top:572.0px;width:39.4px;height:39.4px;" viewBox="0 0 24 24"><path fill="#bdbdbd" d="M11 18c0 1.1-.9 2-2 2s-2-.9-2-2 .9-2 2-2 2 .9 2 2zm-2-8c-1.1 0-2 .9-2 2s.9 2 2 2 2-.9 2-2-.9-2-2-2zm0-6c-1.1 0-2 .9-2 2s.9 2 2 2 2-.9 2-2-.9-2-2-2zm6 4c1.1 0 2-.9 2-2s-.9-2-2-2-2 .9-2 2 .9 2 2 2zm0 2c-1.1 0-2 .9-2 2s.9 2 2 2 2-.9 2-2-.9-2-2-2zm0 6c-1.1 0-2 .9-2 2s.9 2 2 2 2-.9 2-2-.9-2-2-2z"/></svg>
<div class="b" style="left:1670.0px;top:639.2px;width:52px;height:20px;border-radius:10px;background:rgba(0,0,0,0.38);"></div><div class="b" style="left:1664.0px;top:633.2px;width:32px;height:32px;border-radius:16px;background:#fff;box-shadow:0 4px 2px -2px rgba(0,0,0,0.2),0 2px 2px 0 rgba(0,0,0,0.14),0 2px 6px 0 rgba(0,0,0,0.12);"></div>
<div class="t" style="left:1744.6px;top:634.0px;font-size:28px;line-height:28px;color:#212121;font-weight:400;">Apt, suite, unit, building, floor, etc.</div>
<svg class="i" style="left:2170.5px;top:622.6px;width:39.4px;height:39.4px;" viewBox="0 0 24 24"><path fill="#bdbdbd" d="M11 18c0 1.1-.9 2-2 2s-2-.9-2-2 .9-2 2-2 2 .9 2 2zm-2-8c-1.1 0-2 .9-2 2s.9 2 2 2 2-.9 2-2-.9-2-2-2zm0-6c-1.1 0-2 .9-2 2s.9 2 2 2 2-.9 2-2-.9-2-2-2zm6 4c1.1 0 2-.9 2-2s-.9-2-2-2-2 .9-2 2 .9 2 2 2zm0 2c-1.1 0-2 .9-2 2s.9 2 2 2 2-.9 2-2-.9-2-2-2zm0 6c-1.1 0-2 .9-2 2s.9 2 2 2 2-.9 2-2-.9-2-2-2z"/></svg>
<div class="b" style="left:1670.0px;top:689.7px;width:52px;height:20px;border-radius:10px;background:rgba(0,0,0,0.38);"></div><div class="b" style="left:1664.0px;top:683.7px;width:32px;height:32px;border-radius:16px;background:#fff;box-shadow:0 4px 2px -2px rgba(0,0,0,0.2),0 2px 2px 0 rgba(0,0,0,0.14),0 2px 6px 0 rgba(0,0,0,0.12);"></div>
<div class="t" style="left:1744.6px;top:684.5px;font-size:28px;line-height:28px;color:#212121;font-weight:400;">Country</div>
<svg class="i" style="left:2170.5px;top:673.1px;width:39.4px;height:39.4px;" viewBox="0 0 24 24"><path fill="#bdbdbd" d="M11 18c0 1.1-.9 2-2 2s-2-.9-2-2 .9-2 2-2 2 .9 2 2zm-2-8c-1.1 0-2 .9-2 2s.9 2 2 2 2-.9 2-2-.9-2-2-2zm0-6c-1.1 0-2 .9-2 2s.9 2 2 2 2-.9 2-2-.9-2-2-2zm6 4c1.1 0 2-.9 2-2s-.9-2-2-2-2 .9-2 2 .9 2 2 2zm0 2c-1.1 0-2 .9-2 2s.9 2 2 2 2-.9 2-2-.9-2-2-2zm0 6c-1.1 0-2 .9-2 2s.9 2 2 2 2-.9 2-2-.9-2-2-2z"/></svg>
<div class="b" style="left:1670.0px;top:740.2px;width:52px;height:20px;border-radius:10px;background:rgba(0,0,0,0.38);"></div><div class="b" style="left:1664.0px;top:734.2px;width:32px;height:32px;border-radius:16px;background:#fff;box-shadow:0 4px 2px -2px rgba(0,0,0,0.2),0 2px 2px 0 rgba(0,0,0,0.14),0 2px 6px 0 rgba(0,0,0,0.12);"></div>
<div class="t" style="left:1744.6px;top:735.0px;font-size:28px;line-height:28px;color:#212121;font-weight:400;">State</div>
<svg class="i" style="left:2170.5px;top:723.6px;width:39.4px;height:39.4px;" viewBox="0 0 24 24"><path fill="#bdbdbd" d="M11 18c0 1.1-.9 2-2 2s-2-.9-2-2 .9-2 2-2 2 .9 2 2zm-2-8c-1.1 0-2 .9-2 2s.9 2 2 2 2-.9 2-2-.9-2-2-2zm0-6c-1.1 0-2 .9-2 2s.9 2 2 2 2-.9 2-2-.9-2-2-2zm6 4c1.1 0 2-.9 2-2s-.9-2-2-2-2 .9-2 2 .9 2 2 2zm0 2c-1.1 0-2 .9-2 2s.9 2 2 2 2-.9 2-2-.9-2-2-2zm0 6c-1.1 0-2 .9-2 2s.9 2 2 2 2-.9 2-2-.9-2-2-2z"/></svg>
<div class="b" style="left:1670.0px;top:790.7px;width:52px;height:20px;border-radius:10px;background:rgba(0,0,0,0.38);"></div><div class="b" style="left:1664.0px;top:784.7px;width:32px;height:32px;border-radius:16px;background:#fff;box-shadow:0 4px 2px -2px rgba(0,0,0,0.2),0 2px 2px 0 rgba(0,0,0,0.14),0 2px 6px 0 rgba(0,0,0,0.12);"></div>
<div class="t" style="left:1744.6px;top:785.5px;font-size:28px;line-height:28px;color:#212121;font-weight:400;">City</div>
<svg class="i" style="left:2170.5px;top:774.1px;width:39.4px;height:39.4px;" viewBox="0 0 24 24"><path fill="#bdbdbd" d="M11 18c0 1.1-.9 2-2 2s-2-.9-2-2 .9-2 2-2 2 .9 2 2zm-2-8c-1.1 0-2 .9-2 2s.9 2 2 2 2-.9 2-2-.9-2-2-2zm0-6c-1.1 0-2 .9-2 2s.9 2 2 2 2-.9 2-2-.9-2-2-2zm6 4c1.1 0 2-.9 2-2s-.9-2-2-2-2 .9-2 2 .9 2 2 2zm0 2c-1.1 0-2 .9-2 2s.9 2 2 2 2-.9 2-2-.9-2-2-2zm0 6c-1.1 0-2 .9-2 2s.9 2 2 2 2-.9 2-2-.9-2-2-2z"/></svg>
<div class="b" style="left:1670.0px;top:841.2px;width:52px;height:20px;border-radius:10px;background:rgba(0,0,0,0.38);"></div><div class="b" style="left:1664.0px;top:835.2px;width:32px;height:32px;border-radius:16px;background:#fff;box-shadow:0 4px 2px -2px rgba(0,0,0,0.2),0 2px 2px 0 rgba(0,0,0,0.14),0 2px 6px 0 rgba(0,0,0,0.12);"></div>
<div class="t" style="left:1744.6px;top:836.0px;font-size:28px;line-height:28px;color:#212121;font-weight:400;">Postal Code</div>
<svg class="i" style="left:2170.5px;top:824.6px;width:39.4px;height:39.4px;" viewBox="0 0 24 24"><path fill="#bdbdbd" d="M11 18c0 1.1-.9 2-2 2s-2-.9-2-2 .9-2 2-2 2 .9 2 2zm-2-8c-1.1 0-2 .9-2 2s.9 2 2 2 2-.9 2-2-.9-2-2-2zm0-6c-1.1 0-2 .9-2 2s.9 2 2 2 2-.9 2-2-.9-2-2-2zm6 4c1.1 0 2-.9 2-2s-.9-2-2-2-2 .9-2 2 .9 2 2 2zm0 2c-1.1 0-2 .9-2 2s.9 2 2 2 2-.9 2-2-.9-2-2-2zm0 6c-1.1 0-2 .9-2 2s.9 2 2 2 2-.9 2-2-.9-2-2-2z"/></svg>
<div class="b" style="left:1670.0px;top:891.8px;width:52px;height:20px;border-radius:10px;background:rgba(77,61,196,0.5);"></div><div class="b" style="left:1696.0px;top:885.8px;width:32px;height:32px;border-radius:16px;background:#4d3dc4;box-shadow:0 4px 2px -2px rgba(0,0,0,0.2),0 2px 2px 0 rgba(0,0,0,0.14),0 2px 6px 0 rgba(0,0,0,0.12);"></div>
<div class="t" style="left:1744.6px;top:886.6px;font-size:28px;line-height:28px;color:#212121;font-weight:400;">Created</div>
<svg class="i" style="left:2170.5px;top:875.2px;width:39.4px;height:39.4px;" viewBox="0 0 24 24"><path fill="#bdbdbd" d="M11 18c0 1.1-.9 2-2 2s-2-.9-2-2 .9-2 2-2 2 .9 2 2zm-2-8c-1.1 0-2 .9-2 2s.9 2 2 2 2-.9 2-2-.9-2-2-2zm0-6c-1.1 0-2 .9-2 2s.9 2 2 2 2-.9 2-2-.9-2-2-2zm6 4c1.1 0 2-.9 2-2s-.9-2-2-2-2 .9-2 2 .9 2 2 2zm0 2c-1.1 0-2 .9-2 2s.9 2 2 2 2-.9 2-2-.9-2-2-2zm0 6c-1.1 0-2 .9-2 2s.9 2 2 2 2-.9 2-2-.9-2-2-2z"/></svg>
<div class="b" style="left:1670.0px;top:942.3px;width:52px;height:20px;border-radius:10px;background:rgba(0,0,0,0.38);"></div><div class="b" style="left:1664.0px;top:936.3px;width:32px;height:32px;border-radius:16px;background:#fff;box-shadow:0 4px 2px -2px rgba(0,0,0,0.2),0 2px 2px 0 rgba(0,0,0,0.14),0 2px 6px 0 rgba(0,0,0,0.12);"></div>
<div class="t" style="left:1744.6px;top:937.1px;font-size:28px;line-height:28px;color:#212121;font-weight:400;">Birthday Month</div>
<svg class="i" style="left:2170.5px;top:925.7px;width:39.4px;height:39.4px;" viewBox="0 0 24 24"><path fill="#bdbdbd" d="M11 18c0 1.1-.9 2-2 2s-2-.9-2-2 .9-2 2-2 2 .9 2 2zm-2-8c-1.1 0-2 .9-2 2s.9 2 2 2 2-.9 2-2-.9-2-2-2zm0-6c-1.1 0-2 .9-2 2s.9 2 2 2 2-.9 2-2-.9-2-2-2zm6 4c1.1 0 2-.9 2-2s-.9-2-2-2-2 .9-2 2 .9 2 2 2zm0 2c-1.1 0-2 .9-2 2s.9 2 2 2 2-.9 2-2-.9-2-2-2zm0 6c-1.1 0-2 .9-2 2s.9 2 2 2 2-.9 2-2-.9-2-2-2z"/></svg>
<div class="b" style="left:1670.0px;top:992.8px;width:52px;height:20px;border-radius:10px;background:rgba(0,0,0,0.38);"></div><div class="b" style="left:1664.0px;top:986.8px;width:32px;height:32px;border-radius:16px;background:#fff;box-shadow:0 4px 2px -2px rgba(0,0,0,0.2),0 2px 2px 0 rgba(0,0,0,0.14),0 2px 6px 0 rgba(0,0,0,0.12);"></div>
<div class="t" style="left:1744.6px;top:987.6px;font-size:28px;line-height:28px;color:#212121;font-weight:400;">Archived</div>
<svg class="i" style="left:2170.5px;top:976.2px;width:39.4px;height:39.4px;" viewBox="0 0 24 24"><path fill="#bdbdbd" d="M11 18c0 1.1-.9 2-2 2s-2-.9-2-2 .9-2 2-2 2 .9 2 2zm-2-8c-1.1 0-2 .9-2 2s.9 2 2 2 2-.9 2-2-.9-2-2-2zm0-6c-1.1 0-2 .9-2 2s.9 2 2 2 2-.9 2-2-.9-2-2-2zm6 4c1.1 0 2-.9 2-2s-.9-2-2-2-2 .9-2 2 .9 2 2 2zm0 2c-1.1 0-2 .9-2 2s.9 2 2 2 2-.9 2-2-.9-2-2-2zm0 6c-1.1 0-2 .9-2 2s.9 2 2 2 2-.9 2-2-.9-2-2-2z"/></svg>
<div class="b" style="left:1670.0px;top:1043.3px;width:52px;height:20px;border-radius:10px;background:rgba(0,0,0,0.38);"></div><div class="b" style="left:1664.0px;top:1037.3px;width:32px;height:32px;border-radius:16px;background:#fff;box-shadow:0 4px 2px -2px rgba(0,0,0,0.2),0 2px 2px 0 rgba(0,0,0,0.14),0 2px 6px 0 rgba(0,0,0,0.12);"></div>
<div class="t" style="left:1744.6px;top:1038.1px;font-size:28px;line-height:28px;color:#212121;font-weight:400;">Payments</div>
<svg class="i" style="left:2170.5px;top:1026.7px;width:39.4px;height:39.4px;" viewBox="0 0 24 24"><path fill="#bdbdbd" d="M11 18c0 1.1-.9 2-2 2s-2-.9-2-2 .9-2 2-2 2 .9 2 2zm-2-8c-1.1 0-2 .9-2 2s.9 2 2 2 2-.9 2-2-.9-2-2-2zm0-6c-1.1 0-2 .9-2 2s.9 2 2 2 2-.9 2-2-.9-2-2-2zm6 4c1.1 0 2-.9 2-2s-.9-2-2-2-2 .9-2 2 .9 2 2 2zm0 2c-1.1 0-2 .9-2 2s.9 2 2 2 2-.9 2-2-.9-2-2-2zm0 6c-1.1 0-2 .9-2 2s.9 2 2 2 2-.9 2-2-.9-2-2-2z"/></svg>
<div class="b" style="left:1670.0px;top:1093.8px;width:52px;height:20px;border-radius:10px;background:rgba(0,0,0,0.38);"></div><div class="b" style="left:1664.0px;top:1087.8px;width:32px;height:32px;border-radius:16px;background:#fff;box-shadow:0 4px 2px -2px rgba(0,0,0,0.2),0 2px 2px 0 rgba(0,0,0,0.14),0 2px 6px 0 rgba(0,0,0,0.12);"></div>
<div class="t" style="left:1744.6px;top:1088.6px;font-size:28px;line-height:28px;color:#212121;font-weight:400;">Rewards Used</div>
<svg class="i" style="left:2170.5px;top:1077.2px;width:39.4px;height:39.4px;" viewBox="0 0 24 24"><path fill="#bdbdbd" d="M11 18c0 1.1-.9 2-2 2s-2-.9-2-2 .9-2 2-2 2 .9 2 2zm-2-8c-1.1 0-2 .9-2 2s.9 2 2 2 2-.9 2-2-.9-2-2-2zm0-6c-1.1 0-2 .9-2 2s.9 2 2 2 2-.9 2-2-.9-2-2-2zm6 4c1.1 0 2-.9 2-2s-.9-2-2-2-2 .9-2 2 .9 2 2 2zm0 2c-1.1 0-2 .9-2 2s.9 2 2 2 2-.9 2-2-.9-2-2-2zm0 6c-1.1 0-2 .9-2 2s.9 2 2 2 2-.9 2-2-.9-2-2-2z"/></svg>
<div class="b" style="left:1670.0px;top:1144.4px;width:52px;height:20px;border-radius:10px;background:rgba(0,0,0,0.38);"></div><div class="b" style="left:1664.0px;top:1138.4px;width:32px;height:32px;border-radius:16px;background:#fff;box-shadow:0 4px 2px -2px rgba(0,0,0,0.2),0 2px 2px 0 rgba(0,0,0,0.14),0 2px 6px 0 rgba(0,0,0,0.12);"></div>
<div class="t" style="left:1744.6px;top:1139.2px;font-size:28px;line-height:28px;color:#212121;font-weight:400;">Reward Value</div>
<svg class="i" style="left:2170.5px;top:1127.8px;width:39.4px;height:39.4px;" viewBox="0 0 24 24"><path fill="#bdbdbd" d="M11 18c0 1.1-.9 2-2 2s-2-.9-2-2 .9-2 2-2 2 .9 2 2zm-2-8c-1.1 0-2 .9-2 2s.9 2 2 2 2-.9 2-2-.9-2-2-2zm0-6c-1.1 0-2 .9-2 2s.9 2 2 2 2-.9 2-2-.9-2-2-2zm6 4c1.1 0 2-.9 2-2s-.9-2-2-2-2 .9-2 2 .9 2 2 2zm0 2c-1.1 0-2 .9-2 2s.9 2 2 2 2-.9 2-2-.9-2-2-2zm0 6c-1.1 0-2 .9-2 2s.9 2 2 2 2-.9 2-2-.9-2-2-2z"/></svg>
<div class="b" style="left:1670.0px;top:1194.9px;width:52px;height:20px;border-radius:10px;background:rgba(0,0,0,0.38);"></div><div class="b" style="left:1664.0px;top:1188.9px;width:32px;height:32px;border-radius:16px;background:#fff;box-shadow:0 4px 2px -2px rgba(0,0,0,0.2),0 2px 2px 0 rgba(0,0,0,0.14),0 2px 6px 0 rgba(0,0,0,0.12);"></div>
<div class="t" style="left:1744.6px;top:1189.7px;font-size:28px;line-height:28px;color:#212121;font-weight:400;">Total Value</div>
<svg class="i" style="left:2170.5px;top:1178.3px;width:39.4px;height:39.4px;" viewBox="0 0 24 24"><path fill="#bdbdbd" d="M11 18c0 1.1-.9 2-2 2s-2-.9-2-2 .9-2 2-2 2 .9 2 2zm-2-8c-1.1 0-2 .9-2 2s.9 2 2 2 2-.9 2-2-.9-2-2-2zm0-6c-1.1 0-2 .9-2 2s.9 2 2 2 2-.9 2-2-.9-2-2-2zm6 4c1.1 0 2-.9 2-2s-.9-2-2-2-2 .9-2 2 .9 2 2 2zm0 2c-1.1 0-2 .9-2 2s.9 2 2 2 2-.9 2-2-.9-2-2-2zm0 6c-1.1 0-2 .9-2 2s.9 2 2 2 2-.9 2-2-.9-2-2-2z"/></svg>
<div class="b" style="left:1670.0px;top:1245.4px;width:52px;height:20px;border-radius:10px;background:rgba(0,0,0,0.38);"></div><div class="b" style="left:1664.0px;top:1239.4px;width:32px;height:32px;border-radius:16px;background:#fff;box-shadow:0 4px 2px -2px rgba(0,0,0,0.2),0 2px 2px 0 rgba(0,0,0,0.14),0 2px 6px 0 rgba(0,0,0,0.12);"></div>
<div class="t" style="left:1744.6px;top:1240.2px;font-size:28px;line-height:28px;color:#212121;font-weight:400;">Last Activity</div>
<svg class="i" style="left:2170.5px;top:1228.8px;width:39.4px;height:39.4px;" viewBox="0 0 24 24"><path fill="#bdbdbd" d="M11 18c0 1.1-.9 2-2 2s-2-.9-2-2 .9-2 2-2 2 .9 2 2zm-2-8c-1.1 0-2 .9-2 2s.9 2 2 2 2-.9 2-2-.9-2-2-2zm0-6c-1.1 0-2 .9-2 2s.9 2 2 2 2-.9 2-2-.9-2-2-2zm6 4c1.1 0 2-.9 2-2s-.9-2-2-2-2 .9-2 2 .9 2 2 2zm0 2c-1.1 0-2 .9-2 2s.9 2 2 2 2-.9 2-2-.9-2-2-2zm0 6c-1.1 0-2 .9-2 2s.9 2 2 2 2-.9 2-2-.9-2-2-2z"/></svg>
<div class="b" style="left:1670.0px;top:1295.9px;width:52px;height:20px;border-radius:10px;background:rgba(0,0,0,0.38);"></div><div class="b" style="left:1664.0px;top:1289.9px;width:32px;height:32px;border-radius:16px;background:#fff;box-shadow:0 4px 2px -2px rgba(0,0,0,0.2),0 2px 2px 0 rgba(0,0,0,0.14),0 2px 6px 0 rgba(0,0,0,0.12);"></div>
<div class="t" style="left:1744.6px;top:1290.7px;font-size:28px;line-height:28px;color:#212121;font-weight:400;">App Sessions</div>
<svg class="i" style="left:2170.5px;top:1279.3px;width:39.4px;height:39.4px;" viewBox="0 0 24 24"><path fill="#bdbdbd" d="M11 18c0 1.1-.9 2-2 2s-2-.9-2-2 .9-2 2-2 2 .9 2 2zm-2-8c-1.1 0-2 .9-2 2s.9 2 2 2 2-.9 2-2-.9-2-2-2zm0-6c-1.1 0-2 .9-2 2s.9 2 2 2 2-.9 2-2-.9-2-2-2zm6 4c1.1 0 2-.9 2-2s-.9-2-2-2-2 .9-2 2 .9 2 2 2zm0 2c-1.1 0-2 .9-2 2s.9 2 2 2 2-.9 2-2-.9-2-2-2zm0 6c-1.1 0-2 .9-2 2s.9 2 2 2 2-.9 2-2-.9-2-2-2z"/></svg>
<div class="b" style="left:1670.0px;top:1346.4px;width:52px;height:20px;border-radius:10px;background:rgba(0,0,0,0.38);"></div><div class="b" style="left:1664.0px;top:1340.4px;width:32px;height:32px;border-radius:16px;background:#fff;box-shadow:0 4px 2px -2px rgba(0,0,0,0.2),0 2px 2px 0 rgba(0,0,0,0.14),0 2px 6px 0 rgba(0,0,0,0.12);"></div>
<div class="t" style="left:1744.6px;top:1341.2px;font-size:28px;line-height:28px;color:#212121;font-weight:400;">Push Enabled</div>
<svg class="i" style="left:2170.5px;top:1329.8px;width:39.4px;height:39.4px;" viewBox="0 0 24 24"><path fill="#bdbdbd" d="M11 18c0 1.1-.9 2-2 2s-2-.9-2-2 .9-2 2-2 2 .9 2 2zm-2-8c-1.1 0-2 .9-2 2s.9 2 2 2 2-.9 2-2-.9-2-2-2zm0-6c-1.1 0-2 .9-2 2s.9 2 2 2 2-.9 2-2-.9-2-2-2zm6 4c1.1 0 2-.9 2-2s-.9-2-2-2-2 .9-2 2 .9 2 2 2zm0 2c-1.1 0-2 .9-2 2s.9 2 2 2 2-.9 2-2-.9-2-2-2zm0 6c-1.1 0-2 .9-2 2s.9 2 2 2 2-.9 2-2-.9-2-2-2z"/></svg>
<div class="b" style="left:1670.0px;top:1397.0px;width:52px;height:20px;border-radius:10px;background:rgba(0,0,0,0.38);"></div><div class="b" style="left:1664.0px;top:1391.0px;width:32px;height:32px;border-radius:16px;background:#fff;box-shadow:0 4px 2px -2px rgba(0,0,0,0.2),0 2px 2px 0 rgba(0,0,0,0.14),0 2px 6px 0 rgba(0,0,0,0.12);"></div>
<div class="t" style="left:1744.6px;top:1391.8px;font-size:28px;line-height:28px;color:#212121;font-weight:400;">Updated</div>
<svg class="i" style="left:2170.5px;top:1380.4px;width:39.4px;height:39.4px;" viewBox="0 0 24 24"><path fill="#bdbdbd" d="M11 18c0 1.1-.9 2-2 2s-2-.9-2-2 .9-2 2-2 2 .9 2 2zm-2-8c-1.1 0-2 .9-2 2s.9 2 2 2 2-.9 2-2-.9-2-2-2zm0-6c-1.1 0-2 .9-2 2s.9 2 2 2 2-.9 2-2-.9-2-2-2zm6 4c1.1 0 2-.9 2-2s-.9-2-2-2-2 .9-2 2 .9 2 2 2zm0 2c-1.1 0-2 .9-2 2s.9 2 2 2 2-.9 2-2-.9-2-2-2zm0 6c-1.1 0-2 .9-2 2s.9 2 2 2 2-.9 2-2-.9-2-2-2z"/></svg>
<svg class="i" style="left:0;top:0;width:2912px;height:1498px;" viewBox="0 0 2912 1498">
<line x1="1755.5" y1="50.9" x2="1885" y2="139" stroke="#e8402a" stroke-width="6.2" />
<polygon points="1876.6,147.7 1890.5,127.9 1904.3,151.7" fill="#e8402a"/>
</svg>
</body></html>
